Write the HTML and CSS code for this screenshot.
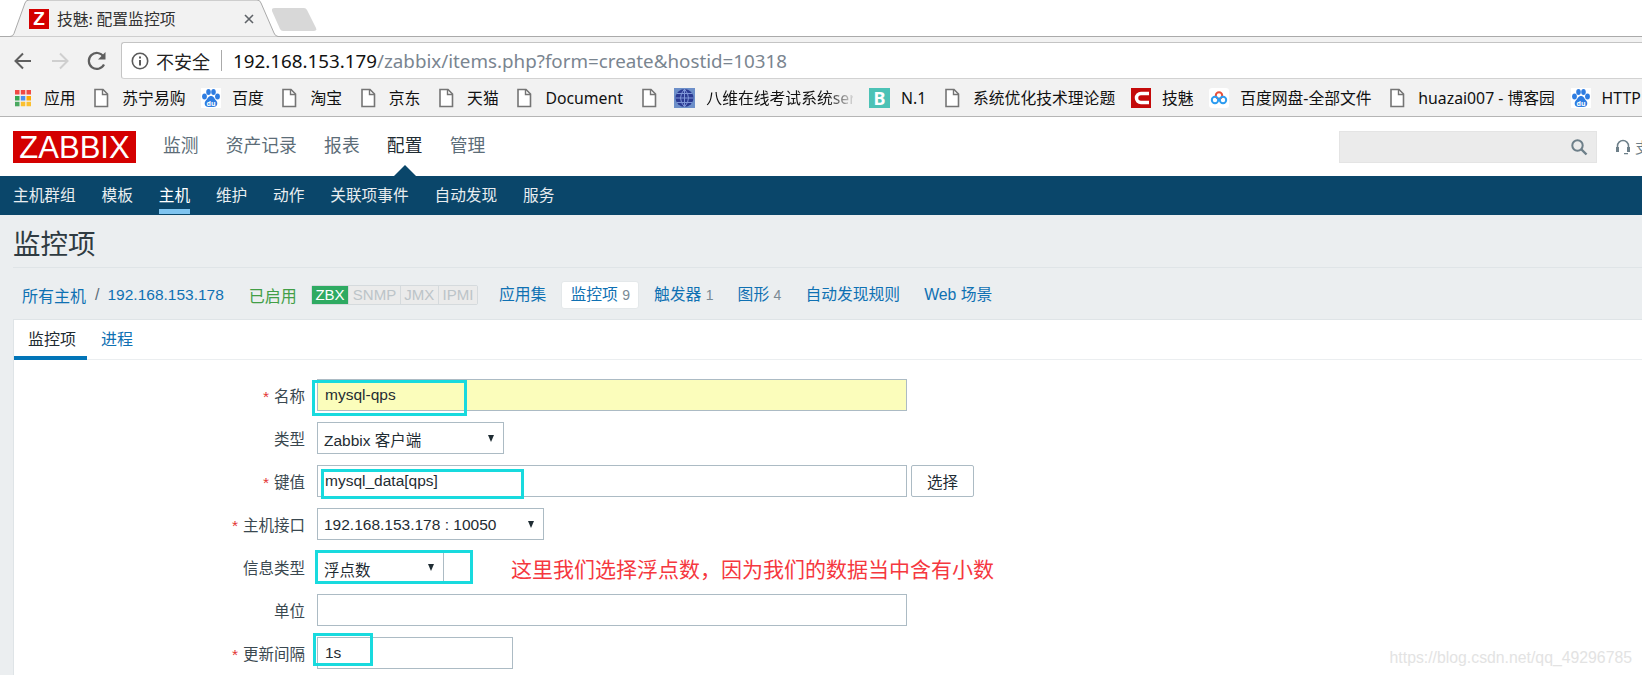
FILE: index.html
```html
<!DOCTYPE html>
<html lang="zh-CN">

<head>
  <meta charset="UTF-8">
  <meta name="viewport" content="width=device-width, initial-scale=1.0">
  <title>技魅: 配置监控项</title>
  <link rel="stylesheet" href="styles.css">
</head>

<body>
  <!-- browser chrome -->
  <div class="tabstrip">
    <div class="tab">
      <svg class="tab_shape" width="272" height="37" viewBox="0 0 272 37">
        <path d="M0 36.5h2q3 0 4-3L17 3q1-3 4-3h228q3 0 4 3l13 30q1 3 4 3.500h2" fill="#f2f2f2" stroke="#aaa" />
      </svg>
      <span class="favicon">Z</span>
      <span class="tab_title">技魅: 配置监控项</span>
      <svg class="tab_close" width="10" height="10" viewBox="0 0 10 10">
        <path d="M1 1l8 8M9 1l-8 8" stroke="#5f6368" stroke-width="1.6" />
      </svg>
    </div>
    <svg class="newtab" width="45" height="23" viewBox="0 0 45 23">
      <path d="M3 0h29q2 0 3 2l9 18q1 3-2 3H11q-2 0-3-2L0 3q-1-3 3-3z" fill="#d8d8d8" />
    </svg>
  </div>

  <div class="toolbar">
    <div class="nav_buttons">
      <svg width="24" height="24" viewBox="0 0 24 24">
        <path d="M20 12H5M12 4.5L4.5 12l7.500 7.500" fill="none" stroke="#5f5f5f" stroke-width="2" />
      </svg>
      <svg width="24" height="24" viewBox="0 0 24 24">
        <path d="M4 12h15M12 4.5l7.500 7.500-7.500 7.500" fill="none" stroke="#cfcfcf" stroke-width="2" />
      </svg>
      <svg width="24" height="24" viewBox="0 0 24 24">
        <path d="M19 15.5A8 8 0 1 1 18.5 7.5" fill="none" stroke="#5f5f5f" stroke-width="2.2" />
        <path d="M20.5 3v7.500H13z" fill="#5f5f5f" />
      </svg>
    </div>
    <div class="omnibox">
      <svg width="18" height="18" viewBox="0 0 18 18">
        <circle cx="9" cy="9" r="7.7" fill="none" stroke="#5a5a5a" stroke-width="1.6" />
        <path d="M8 8h2v5.500H8zM8 4.5h2v2H8z" fill="#5a5a5a" />
      </svg>
      <span class="insecure">不安全</span>
      <span class="omni_sep"></span>
      <span class="url"><b>192.168.153.179</b>/zabbix/items.php?form=create&amp;hostid=10318</span>
    </div>
  </div>

  <div class="bookmarks">
    <div class="bm">
      <svg class="bm_icon" width="20" height="20" viewBox="0 0 20 20">
        <path d="M2 2h4.500v4.500H2zM7.800 2h4.500v4.500H7.800zM13.500 2H18v4.500h-4.500z" fill="#f04a45" />
        <path d="M2 8h4.500v4.500H2z" fill="#34a853" />
        <path d="M7.800 8h4.500v4.500H7.800z" fill="#4a90f0" />
        <path d="M13.500 8H18v4.500h-4.500z" fill="#fbab05" />
        <path d="M2 13.800h4.500v4.500H2z" fill="#4aa860" />
        <path d="M7.800 13.800h4.500v4.500H7.800zM13.500 13.800H18v4.500h-4.500z" fill="#fbc030" />
      </svg>
      <span>应用</span>
    </div>
    <div class="bm">
      <svg class="bm_icon" width="20" height="20" viewBox="0 0 20 20">
        <use href="#doc" />
      </svg>
      <span>苏宁易购</span>
    </div>
    <div class="bm">
      <svg class="bm_icon" width="20" height="20" viewBox="0 0 20 20">
        <use href="#paw" />
      </svg>
      <span>百度</span>
    </div>
    <div class="bm">
      <svg class="bm_icon" width="20" height="20" viewBox="0 0 20 20">
        <use href="#doc" />
      </svg>
      <span>淘宝</span>
    </div>
    <div class="bm">
      <svg class="bm_icon" width="20" height="20" viewBox="0 0 20 20">
        <use href="#doc" />
      </svg>
      <span>京东</span>
    </div>
    <div class="bm">
      <svg class="bm_icon" width="20" height="20" viewBox="0 0 20 20">
        <use href="#doc" />
      </svg>
      <span>天猫</span>
    </div>
    <div class="bm">
      <svg class="bm_icon" width="20" height="20" viewBox="0 0 20 20">
        <use href="#doc" />
      </svg>
      <span>Document</span>
    </div>
    <div class="bm">
      <svg class="bm_icon" width="20" height="20" viewBox="0 0 20 20">
        <use href="#doc" />
      </svg>
    </div>
    <div class="bm">
      <svg class="bm_icon" width="21" height="20" viewBox="0 0 21 20">
        <rect width="21" height="20" fill="#6d8fc9" />
        <circle cx="10.5" cy="10" r="9" fill="#2b3a92" />
        <path d="M1.5 10h18M10.5 1v18M3 5.500h15M3 14.500h15M10.500 1q-8 9 0 18M10.500 1q8 9 0 18" fill="none" stroke="#7f96d8" />
      </svg>
      <span class="bm_fade">八维在线考试系统ser</span>
    </div>
    <div class="bm">
      <span class="bm_b">B</span>
      <span>N.1</span>
    </div>
    <div class="bm">
      <svg class="bm_icon" width="20" height="20" viewBox="0 0 20 20">
        <use href="#doc" />
      </svg>
      <span>系统优化技术理论题</span>
    </div>
    <div class="bm">
      <svg class="bm_icon" width="20" height="20" viewBox="0 0 20 20">
        <rect width="20" height="20" fill="#c40a0a" />
        <path d="M18 5.500H10a4.500 4.500 0 0 0 0 9h8" fill="none" stroke="#fff" stroke-width="3.5" />
      </svg>
      <span>技魅</span>
    </div>
    <div class="bm">
      <svg class="bm_icon" width="20" height="20" viewBox="0 0 20 20">
        <rect width="20" height="20" rx="3" fill="#fff" />
        <circle cx="10" cy="7.500" r="3.200" fill="none" stroke="#e8503a" stroke-width="2" />
        <circle cx="6" cy="12" r="3.200" fill="none" stroke="#2d9cf0" stroke-width="2" />
        <circle cx="14" cy="12" r="3.200" fill="none" stroke="#2d9cf0" stroke-width="2" />
      </svg>
      <span>百度网盘-全部文件</span>
    </div>
    <div class="bm">
      <svg class="bm_icon" width="20" height="20" viewBox="0 0 20 20">
        <use href="#doc" />
      </svg>
      <span>huazai007 - 博客园</span>
    </div>
    <div class="bm">
      <svg class="bm_icon" width="20" height="20" viewBox="0 0 20 20">
        <use href="#paw" />
      </svg>
      <span>HTTP</span>
    </div>
  </div>

  <!-- shared bookmark icons -->
  <svg class="svg_defs" width="0" height="0">
    <defs>
      <g id="doc">
        <path d="M4 1.5h8l4.500 4.500v12.500H4z" fill="#fff" stroke="#757575" stroke-width="1.6" />
        <path d="M11.5 1.5v5h5" fill="none" stroke="#757575" stroke-width="1.4" />
      </g>
      <g id="paw">
        <rect width="20" height="20" fill="#fff" />
        <ellipse cx="3.5" cy="8.5" rx="2.4" ry="3" fill="#2f7de1" />
        <ellipse cx="7.5" cy="4" rx="2.3" ry="3" fill="#2f7de1" />
        <ellipse cx="12.5" cy="4" rx="2.3" ry="3" fill="#2f7de1" />
        <ellipse cx="16.5" cy="8.5" rx="2.4" ry="3" fill="#2f7de1" />
        <path d="M10 8c-3 0-3 2.500-5.500 5-2 3 0 6 3 6h5c3 0 5-3 3-6C13 10.500 13 8 10 8z" fill="#2f7de1" />
        <text x="10" y="17.500" class="paw_text">du</text>
      </g>
    </defs>
  </svg>

  <!-- zabbix page -->
  <header class="top_nav">
    <div class="logo">ZABBIX</div>
    <nav class="main_menu">
      <a>监测</a>
      <a>资产记录</a>
      <a>报表</a>
      <a class="selected">配置</a>
      <a>管理</a>
    </nav>
    <div class="search_box">
      <svg width="18" height="18" viewBox="0 0 18 18">
        <circle cx="7.5" cy="7.500" r="5.200" fill="none" stroke="#6d7f89" stroke-width="2" />
        <path d="M11.5 11.500L16.500 16.500" stroke="#6d7f89" stroke-width="2.4" />
      </svg>
    </div>
    <div class="support">
      <svg width="14" height="16" viewBox="0 0 14 16">
        <path d="M1.5 10V7a5.500 5.500 0 0 1 11 0v3" fill="none" stroke="#6d7f89" stroke-width="1.5" />
        <path d="M0 8h3v5H0zM11 8h3v5h-3zM8 14h4v1.200H8z" fill="#6d7f89" />
      </svg>
      <span>支持</span>
    </div>
  </header>

  <nav class="sub_menu">
    <a>主机群组</a>
    <a>模板</a>
    <a class="selected">主机</a>
    <a>维护</a>
    <a>动作</a>
    <a>关联项事件</a>
    <a>自动发现</a>
    <a>服务</a>
  </nav>

  <main class="page">
    <h1 class="page_title">监控项</h1>

    <div class="host_bar">
      <a class="crumb">所有主机</a>
      <span class="crumb_sep">/</span>
      <a class="crumb crumb_ip">192.168.153.178</a>
      <span class="host_status">已启用</span>
      <div class="avail">
        <span class="on">ZBX</span>
        <span>SNMP</span>
        <span>JMX</span>
        <span>IPMI</span>
      </div>
      <ul class="host_links">
        <li><a>应用集</a></li>
        <li class="active"><a>监控项</a> <sup>9</sup></li>
        <li><a>触发器</a> <sup>1</sup></li>
        <li><a>图形</a> <sup>4</sup></li>
        <li><a>自动发现规则</a></li>
        <li><a>Web 场景</a></li>
      </ul>
    </div>

    <section class="panel">
      <div class="panel_tabs">
        <a class="active">监控项</a>
        <a>进程</a>
      </div>

      <form class="item_form">
        <label class="required">名称</label>
        <div class="control">
          <input class="text wide name" type="text" value="mysql-qps">
          <span class="mark mark_name"></span>
        </div>

        <label>类型</label>
        <div class="control">
          <div class="select type_select">Zabbix 客户端</div>
        </div>

        <label class="required">键值</label>
        <div class="control">
          <input class="text wide" type="text" value="mysql_data[qps]">
          <button class="pick" type="button">选择</button>
          <span class="mark mark_key"></span>
        </div>

        <label class="required">主机接口</label>
        <div class="control">
          <div class="select iface_select">192.168.153.178 : 10050</div>
        </div>

        <label>信息类型</label>
        <div class="control">
          <div class="select value_select">浮点数</div>
          <span class="mark mark_type"></span>
          <span class="note">这里我们选择浮点数，因为我们的数据当中含有小数</span>
        </div>

        <label>单位</label>
        <div class="control">
          <input class="text wide" type="text">
        </div>

        <label class="required">更新间隔</label>
        <div class="control">
          <input class="text short" type="text" value="1s">
          <span class="mark mark_delay"></span>
        </div>
      </form>
    </section>
  </main>

  <div class="watermark">https://blog.csdn.net/qq_49296785</div>
</body>

</html>
```

FILE: styles.css
```css
* {
  box-sizing: border-box;
}

html,
body {
  height: 100%;
}

body {
  margin: 0;
  overflow: hidden;
  position: relative;
  background: #fff;
  color: #1f2c33;
  font-family: 'Liberation Sans', 'Noto Sans CJK SC', sans-serif;
  font-size: 15.5px;
}

a {
  text-decoration: none;
}

.svg_defs {
  position: absolute;
}

.paw_text {
  fill: #fff;
  font-size: 7px;
  font-weight: 700;
  text-anchor: middle;
}

/* browser chrome */
.tabstrip {
  display: flex;
  height: 37px;
  border-bottom: 1px solid #aaa;
}

.tab {
  position: relative;
  display: flex;
  align-items: center;
  width: 272px;
  height: 37px;
  margin-left: 8px;
  padding: 0 26px 0 21px;
  font-family: 'Noto Sans CJK SC', sans-serif;
  font-size: 15.8px;
  color: #333;
}

.tab_shape {
  position: absolute;
  top: 0;
  left: 0;
}

.favicon {
  position: relative;
  width: 20px;
  height: 20px;
  margin-right: 8px;
  background: #d40000;
  color: #fff;
  font-family: 'Liberation Sans', sans-serif;
  font-size: 19px;
  font-weight: 700;
  line-height: 20px;
  text-align: center;
}

.tab_title {
  position: relative;
}

.tab_close {
  position: relative;
  margin-left: auto;
}

.newtab {
  margin: 8px 0 0 -8px;
}

.toolbar {
  display: flex;
  height: 42px;
  padding: 5px 0 0 11px;
  background: #f2f2f2;
}

.nav_buttons {
  display: flex;
  align-items: center;
  gap: 13px;
}

.omnibox {
  flex: 1;
  display: flex;
  align-items: center;
  margin-left: 12px;
  padding-left: 9px;
  background: #fff;
  border: 1px solid #c4c4c4;
  border-right: 0;
  border-bottom-color: #d2d2d2;
  border-radius: 3px 0 0 3px;
}

.insecure {
  margin-left: 7px;
  font-family: 'Noto Sans CJK SC', sans-serif;
  font-size: 18px;
  color: #222;
}

.omni_sep {
  width: 1px;
  height: 21px;
  margin: 0 11px;
  background: #aaa;
}

.url {
  font-family: 'Noto Sans', sans-serif;
  font-size: 18.8px;
  color: #7a8590;
}

.url b {
  font-weight: 400;
  color: #111;
}

.bookmarks {
  display: flex;
  align-items: center;
  gap: 15.7px;
  height: 38px;
  padding-left: 13px;
  background: #f2f2f2;
  border-bottom: 1px solid #b5b5b5;
  font-family: 'Noto Sans', 'Noto Sans CJK SC', sans-serif;
  font-size: 15.8px;
  color: #111;
  white-space: nowrap;
}

.bm {
  flex: none;
  display: flex;
  align-items: center;
  gap: 11px;
}

.bm_fade {
  width: 147px;
  overflow: hidden;
  color: transparent;
  background: linear-gradient(90deg, #111 82%, #d5d5d5 100%);
  -webkit-background-clip: text;
  background-clip: text;
}

.bm_b {
  width: 21px;
  height: 20px;
  background: #4cc2b6;
  color: #fff;
  font-size: 18px;
  font-weight: 700;
  line-height: 20px;
  text-align: center;
}

/* zabbix top */
.top_nav {
  display: flex;
  align-items: center;
  height: 59px;
  padding-left: 13px;
}

.logo {
  width: 123px;
  height: 32px;
  margin-top: 1px;
  background: #d40000;
  color: #fff;
  font-size: 31px;
  line-height: 33px;
  text-align: center;
}

.main_menu {
  display: flex;
  gap: 27.2px;
  margin: 0 0 5px 27px;
  font-size: 17.8px;
}

.main_menu a {
  position: relative;
  color: #5c6d78;
}

.main_menu a.selected {
  color: #1f2c33;
}

.main_menu a.selected::after {
  content: "";
  position: absolute;
  left: 6px;
  bottom: -20px;
  border-left: 12px solid transparent;
  border-right: 12px solid transparent;
  border-bottom: 12px solid #0a466a;
}

.search_box {
  display: flex;
  justify-content: flex-end;
  align-items: center;
  width: 258px;
  height: 32px;
  margin-left: auto;
  padding-right: 8px;
  background: #ebebeb;
  border: 1px solid #e4e4e4;
}

.support {
  display: flex;
  align-items: center;
  gap: 5px;
  width: 100px;
  margin-right: -55px;
  padding-left: 19px;
  color: #6d7f89;
  font-size: 15px;
}

.sub_menu {
  display: flex;
  gap: 25.8px;
  height: 39px;
  padding-left: 13px;
  background: #0a466a;
  line-height: 40px;
  font-size: 15.7px;
}

.sub_menu a {
  color: #e8edf0;
}

.sub_menu a.selected {
  height: 38px;
  color: #fff;
  border-bottom: 5px solid #7fc4f0;
}

/* page */
.page {
  height: 460px;
  padding-left: 13px;
  background: #ebeef0;
}

.page_title {
  height: 53px;
  margin: 0;
  border-bottom: 1px solid #dfe4e7;
  color: #2f3b42;
  font-size: 27.5px;
  font-weight: 400;
  line-height: 60px;
}

.host_bar {
  display: flex;
  align-items: center;
  height: 51px;
  padding: 3px 0 0 9px;
  font-size: 16px;
}

.crumb {
  color: #0f71b3;
}

.crumb_ip {
  font-size: 15.5px;
}

.crumb_sep {
  margin: 0 8px 0 9px;
  color: #5c6d78;
}

.host_status {
  margin-left: 25px;
  color: #429e47;
}

.avail {
  display: flex;
  height: 20px;
  margin-left: 14px;
  border: 1px solid #d5dadd;
  border-radius: 2px;
  font-size: 15px;
  line-height: 18px;
}

.avail span {
  padding: 0 3.6px;
  background: #ebebeb;
  color: #bcc4c8;
  border-left: 1px solid #d5dadd;
}

.avail span.on {
  background: #2eaa62;
  color: #fff;
  border-left: 0;
}

.host_links {
  display: flex;
  align-items: center;
  gap: 6px;
  margin: 0 0 0 12px;
  padding: 0;
  font-size: 15.8px;
  list-style: none;
}

.host_links li {
  height: 28px;
  padding: 0 8px;
  line-height: 26px;
  border: 1px solid transparent;
  border-radius: 3px;
}

.host_links li.active {
  background: #fff;
  border-color: #e4e8ea;
}

.host_links a {
  color: #0f71b3;
}

.host_links sup {
  vertical-align: baseline;
  font-size: 14px;
  color: #7a8a94;
}

.panel {
  height: 356px;
  background: #fff;
  border-top: 1px solid #dfe4e7;
  border-left: 1px solid #dfe4e7;
}

.panel_tabs {
  display: flex;
  height: 40px;
  border-bottom: 1px solid #ebeef0;
  font-size: 16px;
  line-height: 39px;
}

.panel_tabs a {
  padding: 0 14px;
  color: #0f71b3;
}

.panel_tabs a.active {
  height: 40px;
  padding: 0 11px 0 14px;
  color: #1f2c33;
  border-bottom: 4px solid #0275b8;
}

.item_form {
  display: grid;
  grid-template-columns: 291px 1fr;
  grid-auto-rows: 32px;
  column-gap: 12px;
  row-gap: 11px;
  padding-top: 19px;
}

.item_form label {
  align-self: center;
  text-align: right;
  color: #3a4850;
}

.item_form label.required::before {
  content: "*";
  margin-right: 5px;
  color: #e33734;
}

.control {
  position: relative;
  display: flex;
  align-items: center;
}

.text,
.select {
  height: 32px;
  border: 1px solid #acbbc4;
  background: #fff;
  color: #1f2c33;
  font: inherit;
}

.text {
  padding: 0 7px;
}

.wide {
  width: 590px;
}

.short {
  width: 196px;
}

.name {
  background: #fbfdbb;
}

.select {
  position: relative;
  padding: 1px 6px 0;
  line-height: 30px;
}

.select::after {
  content: "";
  position: absolute;
  top: 12px;
  right: 9px;
  border-left: 3.5px solid transparent;
  border-right: 3.5px solid transparent;
  border-top: 7px solid #1f2c33;
}

.type_select {
  width: 187px;
  padding-top: 3px;
}

.iface_select {
  width: 227px;
}

.value_select {
  width: 127px;
  padding-top: 4px;
}

.pick {
  width: 63px;
  height: 32px;
  margin-left: 4px;
  padding: 0;
  border: 1px solid #acbbc4;
  border-radius: 2px;
  background: #fff;
  color: #1f2c33;
  font: inherit;
}

.note {
  margin: 1px 0 0 67px;
  color: #f5383f;
  font-size: 21px;
  white-space: nowrap;
}

/* hand-drawn annotation boxes from the screenshot */
.mark {
  position: absolute;
  border: 3px solid #18dade;
}

.mark_name {
  top: 1px;
  left: -5px;
  width: 155px;
  height: 36px;
}

.mark_key {
  top: 4px;
  left: 4px;
  width: 203px;
  height: 30px;
}

.mark_type {
  top: -1px;
  left: -2px;
  width: 158px;
  height: 34px;
}

.mark_delay {
  top: -4px;
  left: -4px;
  width: 60px;
  height: 33px;
}

.watermark {
  position: absolute;
  right: 10px;
  bottom: 8px;
  color: #e3e3e3;
  font-size: 15.8px;
}
```
